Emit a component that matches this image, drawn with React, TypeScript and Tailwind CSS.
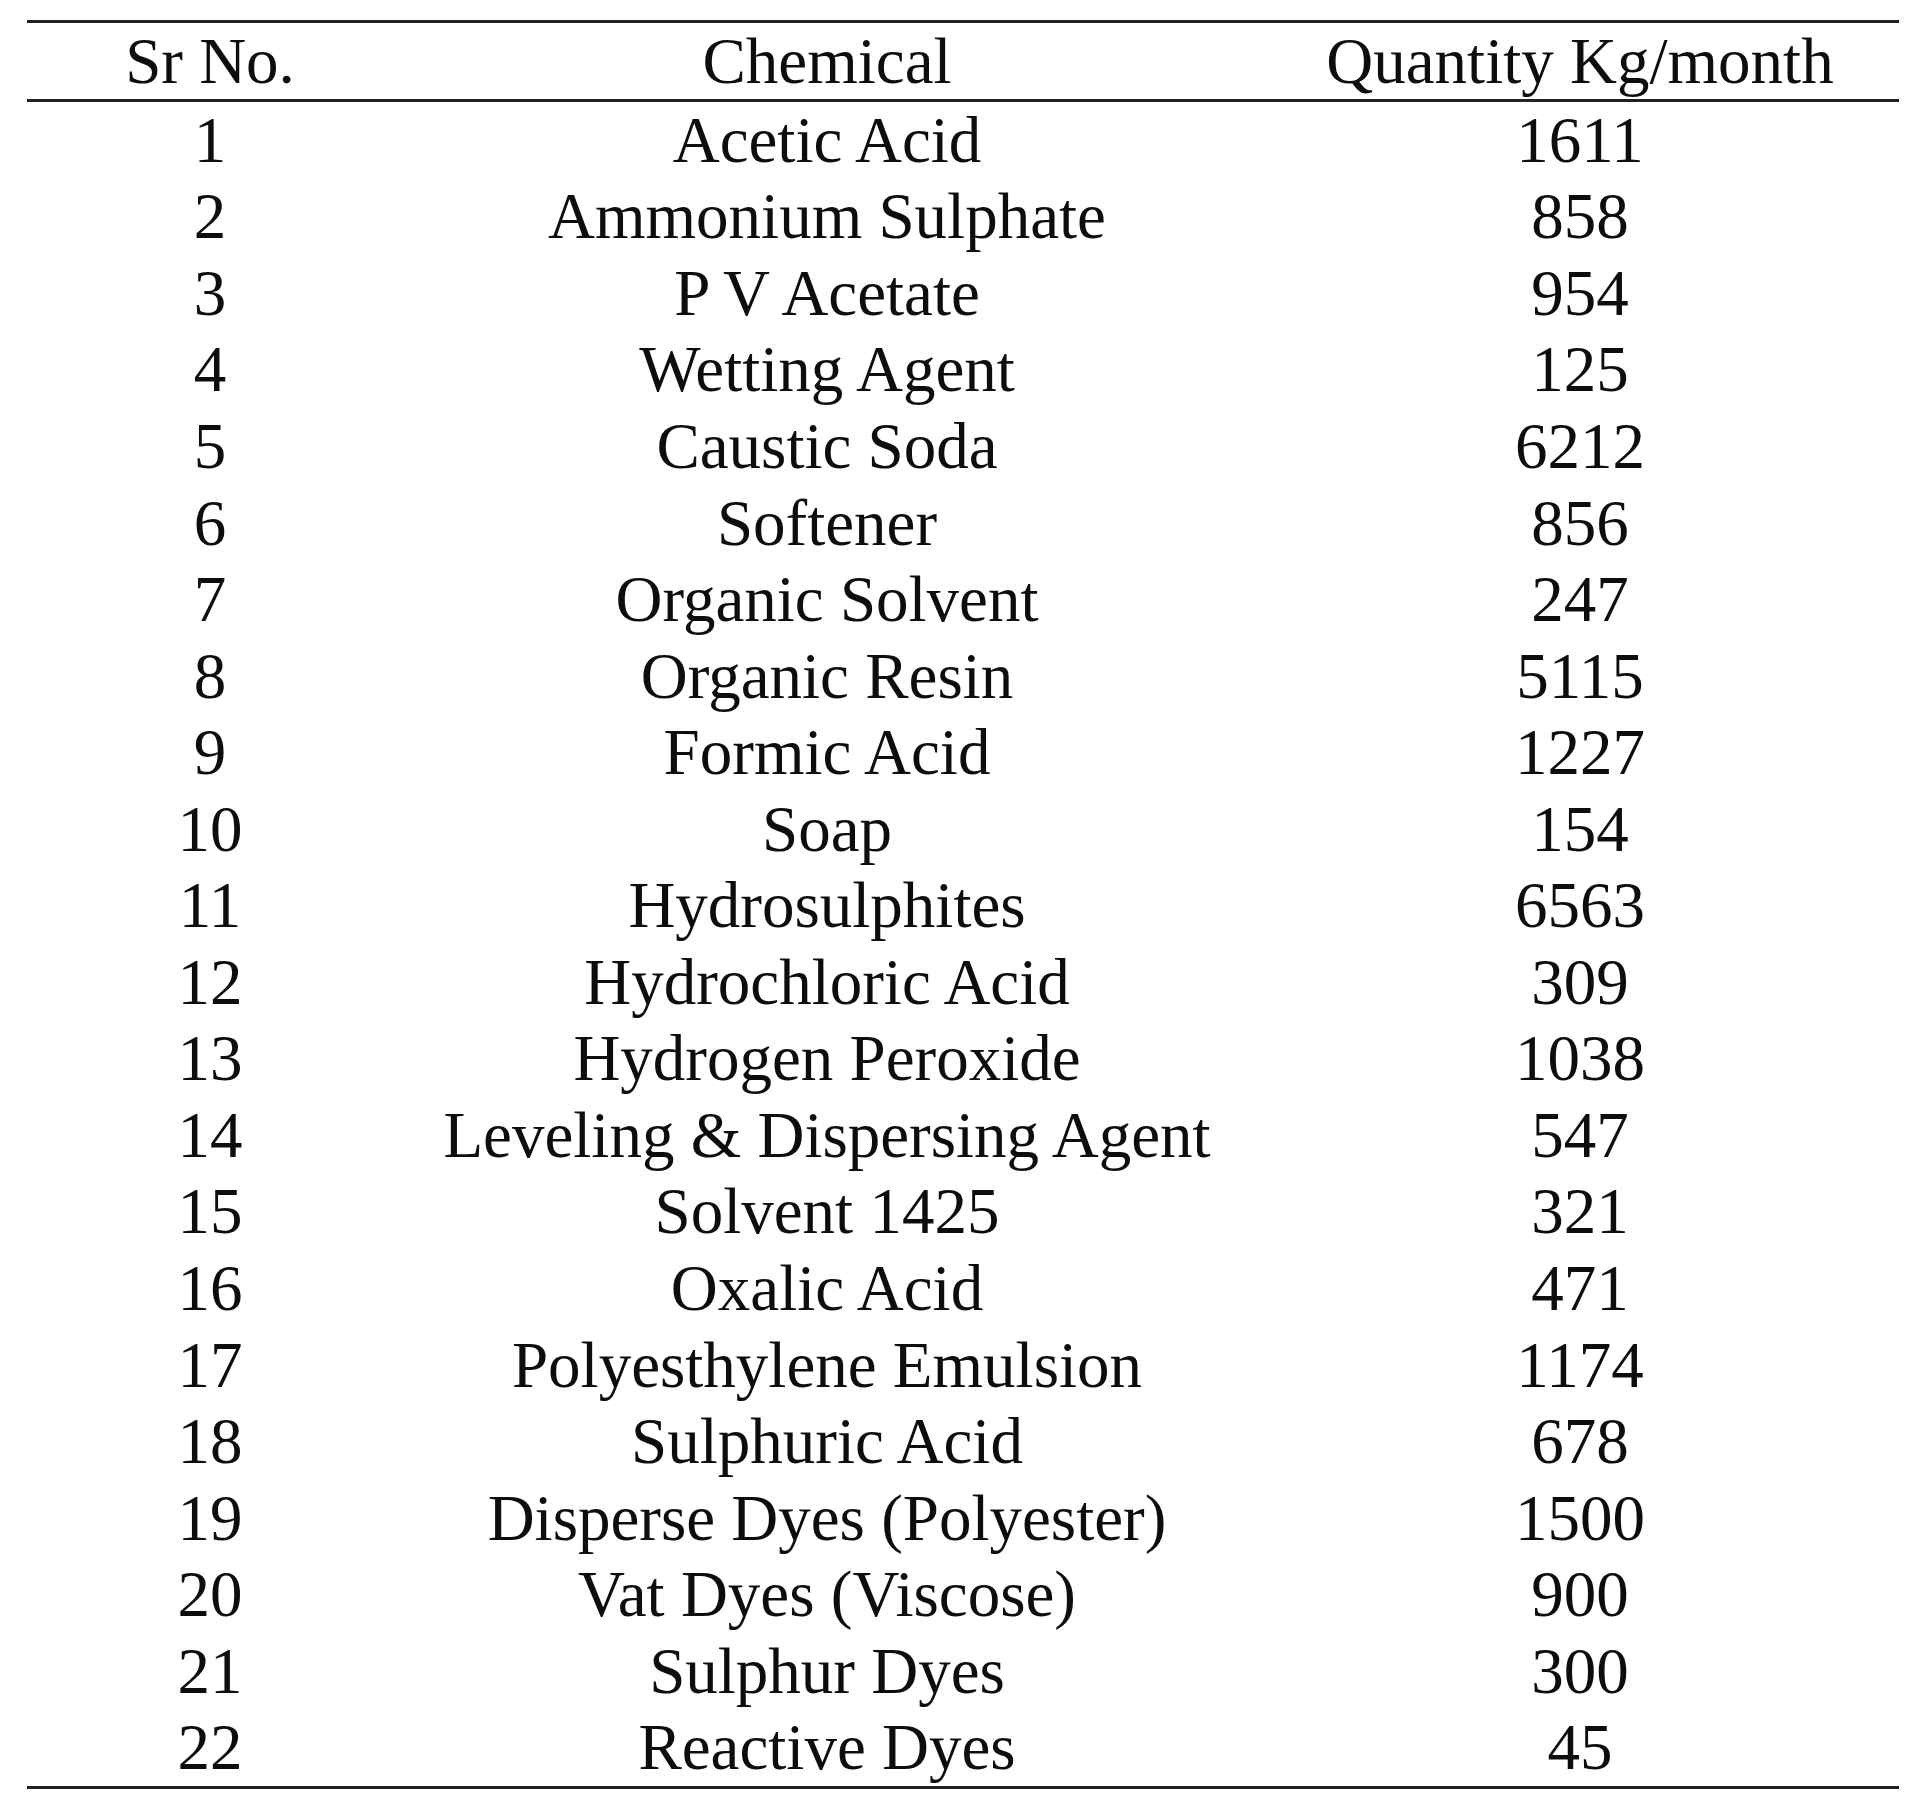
import React from 'react';

const rows: [number, string, string][] = [
  [1, 'Acetic Acid', '1611'],
  [2, 'Ammonium Sulphate', '858'],
  [3, 'P V Acetate', '954'],
  [4, 'Wetting Agent', '125'],
  [5, 'Caustic Soda', '6212'],
  [6, 'Softener', '856'],
  [7, 'Organic Solvent', '247'],
  [8, 'Organic Resin', '5115'],
  [9, 'Formic Acid', '1227'],
  [10, 'Soap', '154'],
  [11, 'Hydrosulphites', '6563'],
  [12, 'Hydrochloric Acid', '309'],
  [13, 'Hydrogen Peroxide', '1038'],
  [14, 'Leveling & Dispersing Agent', '547'],
  [15, 'Solvent 1425', '321'],
  [16, 'Oxalic Acid', '471'],
  [17, 'Polyesthylene Emulsion', '1174'],
  [18, 'Sulphuric Acid', '678'],
  [19, 'Disperse Dyes (Polyester)', '1500'],
  [20, 'Vat Dyes (Viscose)', '900'],
  [21, 'Sulphur Dyes', '300'],
  [22, 'Reactive Dyes', '45'],
];

export default function App() {
  return (
    <div
      className="w-[1912px] h-[1809px] bg-white pt-[20px] pl-[27px] text-[#0d0d0d] text-[65px]"
      style={{ fontFamily: '"Liberation Serif", "Times New Roman", serif' }}
    >
      <div className="w-[1872px] border-t-[3px] border-b-[3px] border-[#222]">
        <div className="grid grid-cols-[366px_868px_638px] h-[79px] items-center border-b-[3px] border-[#222] leading-none">
          <div className="text-center">Sr No.</div>
          <div className="text-center">Chemical</div>
          <div className="text-center">Quantity Kg/month</div>
        </div>
        {rows.map(([no, name, qty]) => (
          <div key={no} className="grid grid-cols-[366px_868px_638px] h-[76.55px] items-center leading-none">
            <div className="text-center">{no}</div>
            <div className="text-center whitespace-nowrap">{name}</div>
            <div className="text-center">{qty}</div>
          </div>
        ))}
      </div>
    </div>
  );
}
